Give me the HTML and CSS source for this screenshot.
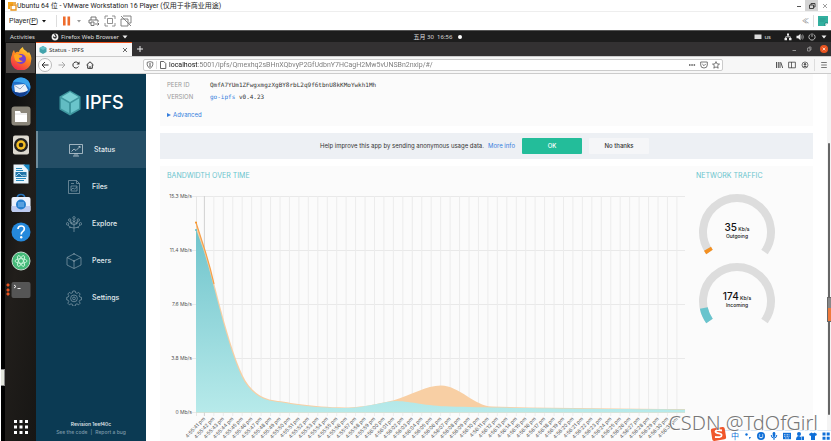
FILE: index.html
```html
<!DOCTYPE html>
<html lang="en">
<head>
<meta charset="utf-8">
<title>Status - IPFS</title>
<link rel="stylesheet" href="styles.css">
</head>
<body>
<div class="host">
  <header class="titlebar">
    <svg class="i10" viewBox="0 0 10 10"><path d="M1 1h5v4H3v3H1z" fill="#f5a51c"/><path d="M4 4h5v5H4zM6 2h3" fill="none" stroke="#e8931a" stroke-width="1.3"/></svg>
    <span class="title">Ubuntu 64 位 - VMware Workstation 16 Player (仅用于非商业用途)</span>
    <button class="wbtn" aria-label="Minimize"><svg class="i8" viewBox="0 0 8 8"><path d="M2 4.5h4" stroke="#555"/></svg></button>
    <button class="wbtn on" aria-label="Restore"><svg class="i8" viewBox="0 0 8 8"><path d="M1.5 3h4v3.5h-4zM3 3V1.5h4V5H5.500" fill="none" stroke="#333" stroke-width=".9"/></svg></button>
    <button class="wbtn" aria-label="Close"><svg class="i8" viewBox="0 0 8 8"><path d="M2 2l4 4M6 2L2 6" stroke="#888" stroke-width=".8"/></svg></button>
  </header>
  <div class="toolbar">
    <button class="player"><span>Player(<u>P</u>)</span><svg class="i8" viewBox="0 0 8 8"><path d="M2 3h4L4 5.500z" fill="#111"/></svg></button>
    <i class="sep"></i>
    <button aria-label="Pause"><svg class="i10" viewBox="0 0 10 10"><path d="M1 .5h2.600v9H1zM5.500 .5h2.600v9H5.500z" fill="#ee6c2c"/></svg></button>
    <svg class="i8" viewBox="0 0 8 8"><path d="M1 3h4L3 5.500z" fill="#999"/></svg>
    <button aria-label="Send keys"><svg class="i12" viewBox="0 0 12 12"><path d="M3 5V2h5v3M3 8H1V5h9v2M3 7h3v3.500H3z" fill="none" stroke="#666" stroke-width=".9"/><path d="M7 9h4M9.500 7.500L11 9l-1.500 1.500" fill="none" stroke="#555" stroke-width=".8"/></svg></button>
    <button aria-label="Full screen"><svg class="i12" viewBox="0 0 12 12"><path d="M1 4V1h3M8 1h3v3M11 8v3H8M4 11H1V8M3.500 3.500h5v5h-5z" fill="none" stroke="#777" stroke-width=".8"/></svg></button>
    <button aria-label="Unity mode"><svg class="i12" viewBox="0 0 12 12"><path d="M3 1h8v7H9M1 4h7v7H1zM1 1l10 10" fill="none" stroke="#777" stroke-width=".9"/></svg></button>
    <span class="grow"></span>
    <span class="chev">≪</span>
    <i class="sep"></i>
    <svg class="i10" viewBox="0 0 10 10"><path d="M0 0h10v7l-3 3H0z" fill="#32b09f"/><path d="M7 10V7h3" fill="#fff" stroke="#167a70" stroke-width=".7"/><path d="M1.500 3h6M1.500 5h5" stroke="#258f83" stroke-width=".6"/></svg>
  </div>

  <div class="gnome">
    <div class="gleft"><button>Activities</button>
      <button class="app"><svg class="i8" viewBox="0 0 8 8"><circle cx="4" cy="4" r="3.400" fill="#eee"/><path d="M4 .5c-1 1.500 2 2 1 4-1 1-2.500 0-2.500-1" fill="none" stroke="#1d1d1d" stroke-width="1.100"/></svg>Firefox Web Browser<svg class="i8" viewBox="0 0 8 8"><path d="M1.500 2.500h5L4 5.500z" fill="#eee"/></svg></button></div>
    <button class="clock">五月 30&nbsp; 16:56<i class="dot"></i></button>
    <div class="gright">
      <button class="kb"><svg class="i8" viewBox="0 0 8 8"><path d="M.5 1.500h7v4.500h-7z" fill="#ddd"/></svg>us</button>
      <svg class="i8" viewBox="0 0 8 8"><path d="M3 .5h2v2H3zM.5 5h2.500v2.300H.5zM5 5h2.500v2.300H5z" fill="#eee"/><path d="M4 2v1.500M1.700 5.500V3.800h4.600v1.700" fill="none" stroke="#eee" stroke-width=".8"/></svg>
      <svg class="i8" viewBox="0 0 8 8"><path d="M.5 2.800h1.700L4.500.8v6.400L2.200 5.200H.5z" fill="#eee"/><path d="M5.500 2.500q1 1.500 0 3M6.600 1.500q1.600 2.500 0 5" fill="none" stroke="#bbb" stroke-width=".7"/></svg>
      <svg class="i8" viewBox="0 0 8 8"><path d="M2.500 1.300a3.100 3.100 0 1 0 3 0M4 .3v3.500" fill="none" stroke="#ddd" stroke-width=".8"/></svg>
      <svg class="i8" viewBox="0 0 8 8"><path d="M1.500 2.500h5L4 5.500z" fill="#eee"/></svg>
    </div>
  </div>

  <div class="desktop">
    <nav class="dock" aria-label="Dock">
      <button class="ff" aria-label="Firefox"><svg viewBox="0 0 24 24"><defs><linearGradient id="fx" x1=".8" y1="0" x2=".3" y2="1"><stop offset="0" stop-color="#ffe23e"/><stop offset=".45" stop-color="#ff8a1e"/><stop offset="1" stop-color="#f0264f"/></linearGradient></defs><path d="M3 9c0-2 1-4 2-5l1 3q2-2 4-1c0-2 2-4 4-5 0 3 3 3 5 6l1-1c2 3 3 6 2 9a10 9 0 0 1-20 1C1.500 13 2 11 3 9z" fill="url(#fx)"/><circle cx="12" cy="13" r="5" fill="#7442cf"/><path d="M5 9q3-2 6 0 3 0 2 2l-3 1q0 3 4 3-5 3-8-1-1-3-1-5z" fill="#ffa51f"/></svg></button>
      <button aria-label="Thunderbird"><svg viewBox="0 0 20 20"><circle cx="10" cy="10" r="9.500" fill="#1f70c9"/><path d="M10 .5a9.500 9.500 0 0 1 9 12q-3-6-9-7-4-1-8-.500A9 9 0 0 1 10 .5z" fill="#3aa4ee"/><path d="M3 8l11-1 3 6-5 4-8-2z" fill="#eef3fa"/><path d="M3 8l6 4 5-5" fill="none" stroke="#96a8c3"/><path d="M1 13q5 5 16 1-3 6-8 5.500-6-1-8-6.500z" fill="#123f91"/></svg></button>
      <button aria-label="Files"><svg viewBox="0 0 20 20"><rect x=".5" y=".5" width="19" height="19" rx="3" fill="#8c877b"/><path d="M4 5h5l1 2h6v9H4z" fill="#fff"/><path d="M4 8h12" stroke="#ddd"/></svg></button>
      <button aria-label="Rhythmbox"><svg viewBox="0 0 20 20"><rect x="2" y=".5" width="16" height="19" rx="2" fill="#ddd9cf"/><circle cx="10" cy="10" r="7" fill="#222"/><circle cx="10" cy="10" r="4.700" fill="#f4bf25"/><circle cx="10" cy="10" r="2.300" fill="#2a2515"/></svg></button>
      <button aria-label="Writer"><svg viewBox="0 0 20 20"><path d="M2.500.5h11l4 4v15h-15z" fill="#e9f5fc"/><path d="M12 .5h6.500v7z" fill="#1b8ac6"/><path d="M5 4.500h6M5 6.500h7M5 14.500h10M5 16.500h8" stroke="#258bbf"/><path d="M4.500 8h11v5h-11z" fill="#2174a8"/><path d="M5 12l3-3 3 3 2-1 2 1" fill="none" stroke="#9fd3ed"/></svg></button>
      <button aria-label="Software"><svg viewBox="0 0 20 20"><path d="M6 6q0-4.500 4-4.500T14 6" fill="none" stroke="#2674bd" stroke-width="1.500"/><rect x=".5" y="4" width="19" height="15" rx="2" fill="#eaf0fc"/><path d="M.5 13h19v4q0 2-2 2h-15q-2 0-2-2z" fill="#bdcbf0"/><circle cx="10" cy="11.500" r="5" fill="#2680cf"/><path d="M8 9v5M10 9v5M12 9v5" stroke="#a4d2fa" stroke-width=".8"/></svg></button>
      <button aria-label="Help"><svg viewBox="0 0 20 20"><circle cx="10" cy="10" r="9.500" fill="#2589dc"/><path d="M7 7q0-3 3.200-3t3.100 3q0 1.500-1.700 2.600Q10.200 10.600 10.200 12.500" fill="none" stroke="#fff" stroke-width="1.700"/><circle cx="10.200" cy="15.300" r="1.200" fill="#fff"/></svg></button>
      <button aria-label="Atom"><svg viewBox="0 0 20 20"><circle cx="10" cy="10" r="9" fill="#45ba79" stroke="#c6ddd0"/><g fill="none" stroke="#d6fae4" stroke-width=".8"><ellipse cx="10" cy="10" rx="6" ry="2.300"/><ellipse cx="10" cy="10" rx="6" ry="2.300" transform="rotate(60 10 10)"/><ellipse cx="10" cy="10" rx="6" ry="2.300" transform="rotate(120 10 10)"/></g></svg></button>
      <button class="term" aria-label="Terminal"><svg viewBox="0 0 20 20"><rect x=".5" y="2" width="19" height="16" rx="2" fill="#555"/><path d="M3 5l2 1.500L3 8M6.500 8.500h3" fill="none" stroke="#fff" stroke-width=".9"/></svg></button>
      <button class="apps" aria-label="Show applications"><svg viewBox="0 0 14 14"><path d="M0 0h3v3H0zM5.500 0h3v3h-3zM11 0h3v3h-3zM0 5.500h3v3H0zM5.500 5.500h3v3h-3zM11 5.500h3v3h-3zM0 11h3v3H0zM5.500 11h3v3h-3zM11 11h3v3h-3z" fill="#fff"/></svg></button>
    </nav>

    <main class="browser">
      <div class="tabs">
        <div class="tab"><svg class="i8" viewBox="0 0 8 8"><path d="M4 0l3.500 2v4L4 8 .5 6V2z" fill="#43a3ab"/><path d="M4 0l3.500 2L4 4 .5 2z" fill="#63c0c7"/></svg><span>Status - IPFS</span><button aria-label="Close tab"><svg class="i8" viewBox="0 0 8 8"><path d="M2 2l4 4M6 2L2 6" stroke="#444" stroke-width=".8"/></svg></button></div>
        <button class="new" aria-label="New tab"><svg class="i8" viewBox="0 0 8 8"><path d="M4 1v6M1 4h6" stroke="#eee"/></svg></button>
        <span class="grow"></span>
        <button aria-label="Minimize window"><svg class="i8" viewBox="0 0 8 8"><path d="M2.500 5.500h3.500" stroke="#aaa" stroke-width=".8"/></svg></button>
        <button aria-label="Restore window"><svg class="i8" viewBox="0 0 8 8"><path d="M2.500 3h2.500v3H2.500zM4 3V2h2v3H5" fill="none" stroke="#aaa" stroke-width=".7"/></svg></button>
        <button aria-label="Close window"><svg class="i8" viewBox="0 0 8 8"><circle cx="4" cy="4" r="4" fill="#e95420"/><path d="M2.700 2.700l2.600 2.600M5.300 2.700L2.700 5.300" stroke="#fff" stroke-width=".7"/></svg></button>
      </div>
      <div class="navbar">
        <button class="back" aria-label="Back"><svg class="i8" viewBox="0 0 8 8"><path d="M7.500 4H1M4 1L1 4l3 3" fill="none" stroke="#333"/></svg></button>
        <button aria-label="Forward"><svg class="i8" viewBox="0 0 8 8"><path d="M.5 4H7M4 1l3 3-3 3" fill="none" stroke="#aaa"/></svg></button>
        <button aria-label="Reload"><svg class="i8" viewBox="0 0 8 8"><path d="M6.500 5.500a3 3 0 1 1 0-3" fill="none" stroke="#333"/><path d="M7.500.5v3h-3z" fill="#333"/></svg></button>
        <button aria-label="Home"><svg class="i8" viewBox="0 0 8 8"><path d="M.5 4L4 .8 7.500 4M1.700 3.500V7.300h4.600V3.500M4 7.300V5" fill="none" stroke="#333"/></svg></button>
        <div class="url">
          <svg class="i8" viewBox="0 0 8 8"><path d="M4 .7l2.800.6v2.500Q6.500 6 4 7.400 1.500 6 1.200 3.800V1.300z" fill="none" stroke="#555" stroke-width=".8"/><path d="M4 2v4" stroke="#555"/></svg>
          <i class="sep"></i>
          <svg class="i8" viewBox="0 0 8 8"><path d="M1.500.5h3.300l2 2v5H1.500z" fill="none" stroke="#555" stroke-width=".9"/></svg>
          <input aria-label="Address" value="localhost:5001/ipfs/Qmexhq2sBHnXQbvyP2GfUdbnY7HCagH2Mw5vUNSBn2nxip/#/">
          <div class="urlbtns">
          <svg class="i8" viewBox="0 0 8 8"><path d="M1 3.300h1.500v1.400H1zM3.300 3.300h1.500v1.400H3.300zM5.600 3.300h1.500v1.400H5.600z" fill="#555"/></svg>
          <svg class="i8" viewBox="0 0 8 8"><path d="M.7 1h6.600v3a3.300 3 0 0 1-6.600 0zM2.300 3L4 4.700 5.700 3" fill="none" stroke="#555" stroke-width=".8"/></svg>
          <svg class="i8" viewBox="0 0 8 8"><path d="M4 .6l1 2.300 2.500.2-1.900 1.600.6 2.500L4 5.900 1.800 7.200l.6-2.500L.5 3.100 3 2.900z" fill="none" stroke="#444" stroke-width=".7"/></svg>
          </div>
        </div>
        <div class="tools">
          <button aria-label="Library"><svg class="i8" viewBox="0 0 8 8"><path d="M1.500 1v6M3.300 1v6M5 1v6M5.800 1.300L7.700 7" stroke="#555"/></svg></button>
          <button aria-label="Sidebar"><svg class="i8" viewBox="0 0 8 8"><path d="M.6 1.200h6.800v5.600H.6zM3.500 1v6" fill="none" stroke="#444" stroke-width=".8"/></svg></button>
          <button aria-label="Account"><svg class="i8" viewBox="0 0 8 8"><circle cx="4" cy="4" r="3" fill="none" stroke="#555" stroke-width=".8"/><circle cx="4" cy="3.200" r="1.200" fill="#555"/><path d="M2 6q2-2.300 4 0z" fill="#555"/></svg></button>
          <i class="sep"></i>
          <button aria-label="Menu"><svg class="i8" viewBox="0 0 8 8"><path d="M1.200 1.500h5.600M1.200 4h5.600M1.200 6.500h5.600" stroke="#555" stroke-width=".8"/></svg></button>
        </div>
      </div>

      <div class="page">
        <aside class="side">
          <div class="logo"><svg viewBox="0 0 22 26"><path d="M11 .5l10.500 6v13L11 25.500.5 19.500v-13z" fill="#3f979f"/><path d="M11 2l8.500 5L11 12 2.500 7z" fill="#7ad0d4"/><path d="M2 8.500l8 4.700v9.800l-8-4.500z" fill="#62bcc3"/><path d="M20 8.500l-8 4.700v9.800l8-4.500z" fill="#6ac5cb"/></svg><span>IPFS</span></div>
          <nav class="menu">
            <a class="active" href="#status"><svg viewBox="0 0 16 16"><path d="M1.500 2.500h13v9h-13zM7 11.500v2M9 11.500v2M5 14h6M3.500 9.500L6 7l2 1.500L12 4.500M10.500 4.500H12V6"/></svg>Status</a>
            <a href="#files"><svg viewBox="0 0 16 16"><path d="M2.500 1.500h8l3 3v10h-11zM10.500 1.500v3h3M5 7h6v5H5zM5 11l2-2 1.500 1L11 8M5 4.500h3"/></svg>Files</a>
            <a href="#explore"><svg viewBox="0 0 16 16"><path d="M8 16V3M8 12q-5 0-6-3M8 12q5 0 6-3M8 9Q4.500 8 4 5M8 9q3.500-1 4-4M8 6L6.500 4.500M8 6l1.500-1.500M4.500 11L3 12M11.500 11l1.500 1"/><circle cx="8" cy="1.800" r="1.200"/><circle cx="3.700" cy="4" r="1.200"/><circle cx="12.300" cy="4" r="1.200"/><circle cx="1.500" cy="7.800" r="1.200"/><circle cx="14.500" cy="7.800" r="1.200"/><circle cx="5.500" cy="7" r=".8"/><circle cx="10.500" cy="7" r=".8"/></svg>Explore</a>
            <a href="#peers"><svg viewBox="0 0 16 16"><path d="M8 .8l7 3.700v7.500L8 15.500 1 12V4.500zM1 4.500L8 8l7-3.500M8 8v7.500"/><circle cx="8" cy=".9" r=".5"/><circle cx="8" cy="8" r=".6"/></svg>Peers</a>
            <a href="#settings"><svg viewBox="0 0 16 16"><path d="M6.800 1h2.400l.4 1.800 1.400.6 1.600-1 1.600 1.600-1 1.600.6 1.400 1.700.4v2.400l-1.700.4-.6 1.400 1 1.600-1.600 1.600-1.600-1-1.400.6-.4 1.700H6.800l-.4-1.700-1.400-.6-1.600 1-1.600-1.600 1-1.600-.6-1.400L.7 9.800V7.400L2.200 7l.6-1.400-1-1.600 1.600-1.600 1.600 1 1.400-.6z"/><circle cx="8" cy="8.400" r="3.400"/><circle cx="8" cy="8.400" r="1.400"/></svg>Settings</a>
          </nav>
          <footer class="rev"><div>Revision 1eef40c</div><div class="links"><a href="#code">See the code</a><span>|</span><a href="#bug">Report a bug</a></div></footer>
        </aside>

        <div class="content">
          <section class="panel info">
            <dl><dt>PEER ID</dt><dd>QmfA7YUm1ZFwgxmgzXgBY8rbL2q9f6tbnU8kKMoYwkh1Mh</dd><dt>VERSION</dt><dd><a href="#version">go-ipfs</a> v0.4.23</dd></dl>
            <details><summary><svg viewBox="0 0 4 6"><path d="M0 1l4 2-4 2z" fill="#357edd"/></svg>Advanced</summary></details>
          </section>
          <section class="ask"><span>Help improve this app by sending anonymous usage data.</span><a href="#more">More info</a><button class="ok">OK</button><button class="no">No thanks</button></section>
          <section class="panel charts">
            <div><h2>BANDWIDTH OVER TIME</h2><svg class="chart" viewBox="167 190 520 251" id="chart" role="img" aria-label="Bandwidth over time">
              <defs><linearGradient id="in" x1="0" y1="0" x2="0" y2="1"><stop offset="0" stop-color="#70c4cc"/><stop offset="1" stop-color="#b7eaea"/></linearGradient></defs>
              <g id="grid"></g>
              <path d="M196 222.500L204.500 249C216 285 226 338 242.500 375C250 391 262 399 275 400.500C290 402.500 310 407 345 407.500C365 407.500 385 402 393 400.500C412 395 426 385.500 441 385.500C460 386 474 406 492 406.500C550 408 620 408.500 685 409V412.500H196z" fill="#f8cfa4"/>
              <path d="M196 229L203.500 250C215 286 225 339 241.500 376C249 392 261 400 275 401.500C290 403.500 310 408 345 408C365 408 385 401 397 401C412 401.500 425 406 450 406.500C500 408 600 409 685 409.500V412.500H196z" fill="url(#in)"/>
              <path d="M196 222.500L204.500 249Q210 266 214 284" fill="none" stroke="#f5a04b" stroke-width="1.200"/>
              <circle cx="196" cy="222.500" r="1" fill="#f39021"/><circle cx="196" cy="230" r="1" fill="#5bbfca"/>
            </svg></div>
            <div><h2>NETWORK TRAFFIC</h2>
              <div class="gauge"><svg viewBox="0 0 82 62"><path d="M13.500 58A34 34 0 1 1 68.500 58" stroke="#ddd"/><path d="M13.500 58A34 34 0 0 1 11.500 54.800" stroke="#f39021"/></svg><p><b>35</b> Kb/s<br>Outgoing</p></div>
              <div class="gauge"><svg viewBox="0 0 82 62"><path d="M13.500 58A34 34 0 1 1 68.500 58" stroke="#ddd"/><path d="M13.500 58A34 34 0 0 1 7.800 45" stroke="#69c4cd"/></svg><p><b>174</b> Kb/s<br>Incoming</p></div>
            </div>
          </section>
        </div>
        <div class="scroll"><i></i></div>
      </div>
    </main>
  </div>
  <i class="lefttag"></i><i class="righttag"></i>
  <div class="ime">
    <svg viewBox="0 0 17 14"><rect x="1.500" y=".8" width="14" height="12.500" rx="2" fill="#f0562b" transform="rotate(-9 8 7)"/><path d="M12 3.500q-6-1-6.500 1 0 1.500 3.500 1.800 3 .5 2.500 2.400-.7 2-6.500 1.300" fill="none" stroke="#fff" stroke-width="1.800"/></svg>
    <span>中</span>
    <svg class="i8" viewBox="0 0 8 8"><circle cx="2.500" cy="2.500" r="1.200"/><path d="M5 5h2L5.500 7.500z"/></svg>
    <svg class="i8" viewBox="0 0 8 8"><circle cx="4" cy="4" r="4"/><path d="M1.800 4.500q2.200 3 4.400 0M2 3h1.200M5 3h1.200" stroke="#fff" fill="none"/></svg>
    <svg class="i8" viewBox="0 0 8 8"><rect x="2.700" width="2.600" height="5" rx="1.300"/><path d="M1.200 3q0 3 2.800 3t2.800-3M4 6v2" fill="none" stroke="#0f6fd8"/></svg>
    <svg class="i8" viewBox="0 0 8 8"><path d="M0 .8h8v6.400H0z"/><path d="M1 2.700h6M1 4.300h6M2 6h4" stroke="#fff" stroke-width=".7" stroke-dasharray="1 .5"/></svg>
    <svg class="i8" viewBox="0 0 8 8"><circle cx="3" cy="2" r="2"/><path d="M0 8q0-4 3-4l2 1v3zM5.500 4.500H8V8H5.500z"/></svg>
    <svg class="i8" viewBox="0 0 8 8"><path d="M2.500.5q1.500 1.500 3 0L8 2 7 4l-1-.5V8H2V3.500L1 4 0 2z"/></svg>
    <svg class="i8" viewBox="0 0 8 8"><path d="M.5.5h3v3h-3zM4.700.5h3v3h-3zM.5 4.700h3v3h-3zM4.700 4.700h3v3h-3z"/></svg>
  </div>
  <div class="mark">CSDN @TdOfGirl</div>
</div>
<script src="chart.js"></script>
</body>
</html>
```
FILE: styles.css
```css
* { box-sizing: border-box; }
body { margin: 0; background: #fff; font-family: "Noto Sans", "Noto Sans CJK SC", sans-serif; font-size: 7px; line-height: 10px; }
button { border: 0; padding: 0; margin: 0; background: none; color: inherit; font: inherit; display: flex; align-items: center; justify-content: center; }
a { text-decoration: none; color: #357edd; }
svg { display: block; flex: none; }
.i8 { width: 8px; height: 8px; }
.i10 { width: 10px; height: 10px; }
.i12 { width: 12px; height: 12px; }
.grow { flex: 1; }
.sep { width: 1px; height: 12px; background: #ddd; }

.host { position: relative; height: 100vh; overflow: hidden; display: flex; flex-direction: column; border-left: 1px solid #fff; box-shadow: inset 4px 0 #000; padding-left: 4px; }
.titlebar { display: flex; align-items: center; height: 12px; border-bottom: 1px solid #eee; padding-left: 2px; color: #222; }
.title { flex: 1; font-family: Roboto, "Noto Sans CJK SC", sans-serif; white-space: nowrap; }
.wbtn { width: 13px; height: 11px; }
.wbtn.on { background: #d4d4d4; }
.toolbar { display: flex; align-items: center; gap: 4px; height: 18px; padding: 0 3px 0 4px; color: #222; }
.player { gap: 2px; font-family: "Liberation Sans", sans-serif; }
.toolbar .player + .sep { margin: 0 1px 0 4px; }
.chev { color: #777; }

.gnome { display: grid; grid-template-columns: 1fr auto 1fr; align-items: center; height: 12px; background: #1d1d1d; color: #ddd; border-top: 1px solid #555; padding: 0 3px 0 5px; font-size: 6px; }
.gleft, .gright { display: flex; align-items: center; gap: 5px; }
.gleft { gap: 16px; }
.gright { justify-content: flex-end; gap: 4px; }
.app, .kb { gap: 2px; }
.kb { margin-right: 9px; }
.dot { width: 4px; height: 4px; border-radius: 2px; background: #fff; margin-left: 6px; }
.clock { margin-left: 38px; }

.desktop { flex: 1; min-height: 0; display: flex; }
.dock { width: 31px; background: linear-gradient(100deg, #111 20%, #211e1b 50%, #171614); display: flex; flex-direction: column; align-items: center; gap: 9px; padding-bottom: 7px; }
.dock svg { width: 20px; height: 20px; }
.dock .ff { width: 29px; height: 30px; background: #4d4946; margin: 1px 0 -5px; }
.dock .ff svg { width: 24px; height: 24px; }
.dock .term { width: 31px; background: radial-gradient(circle at 3px 5px, #e95420 1px, transparent 2px), radial-gradient(circle at 3px 10px, #e95420 1px, transparent 2px), radial-gradient(circle at 3px 14px, #e95420 1px, transparent 2px); }
.dock .apps { margin-top: auto; }
.dock .apps svg { width: 14px; height: 14px; }

.browser { flex: 1; min-width: 0; display: flex; flex-direction: column; }
.tabs { display: flex; align-items: center; gap: 7px; height: 14px; background: #333132; padding-right: 3px; }
.tab { display: flex; align-items: center; gap: 2px; width: 96px; height: 14px; background: #f8f8f8; border-top: 1px solid #e95420; padding: 0 3px; color: #333; font-size: 6px; }
.tab span { flex: 1; }
.new { margin-left: -3px; }
.navbar { display: flex; align-items: center; gap: 6px; height: 18px; background: #f7f7f7; border-top: 1px solid #ccc; border-bottom: 1px solid #ccc; padding: 0 3px 0 2px; }
.back { width: 14px; height: 14px; border: 1px solid #bbb; border-radius: 7px; background: #fff; }
.url { flex: 1; margin: 0 46px 0 43px; height: 12px; display: flex; align-items: center; gap: 2px; background: #fff; border: 1px solid #ccc; border-radius: 2px; padding: 0 2px 0 2px; }
.url .sep { height: 8px; }
.url input { flex: 1; min-width: 0; border: 0; padding: 0; outline: 0; font: 7px/10px Roboto, "Noto Sans", sans-serif; height: 10px; color: transparent; background: linear-gradient(90deg, #111 29px, #777 29px); -webkit-background-clip: text; background-clip: text; }
.urlbtns { display: flex; gap: 4px; }
.tools { display: flex; align-items: center; gap: 5px; }

.page { flex: 1; min-height: 0; display: flex; background: #fff; font-family: Inter, "Liberation Sans", sans-serif; }
.side { width: 110px; background: #0b3a53; display: flex; flex-direction: column; color: #e3eaee; }
.logo { display: flex; align-items: center; gap: 4px; height: 57px; padding-left: 23px; font-size: 18px; font-weight: 500; line-height: 20px; color: #fff; }
.logo svg { width: 22px; height: 26px; }
.menu a { display: flex; align-items: center; gap: 10px; height: 37px; padding-left: 30px; color: #e3eaee; font-weight: 500; }
.menu a.active { background: #244e66; border-left: 2px solid #6d8c9c; }
.menu svg { width: 16px; height: 16px; fill: none; stroke: #88a1ae; stroke-width: .7; }
.menu .active svg { stroke: #d5e0e5; }
.rev { margin-top: auto; text-align: center; font-size: 5px; line-height: 8px; padding-bottom: 5px; font-weight: 500; }
.links { display: flex; justify-content: center; gap: 3px; color: #7d9aa9; }
.links a { color: #7d9aa9; }

.content { flex: 1; min-width: 0; display: flex; flex-direction: column; gap: 7px; padding: 0 14px; }
.panel { background: #fbfbfb; padding: 5px 7px; }
.info { height: 52px; padding-top: 6px; }
.info dl { margin: 0; display: grid; grid-template-columns: 43px 1fr; row-gap: 2px; }
.info dt { color: #999; font-size: 6px; }
.info dd { margin: 0; color: #333; font-family: "DejaVu Sans Mono", monospace; font-size: 6px; }
.info summary { display: flex; align-items: center; gap: 2px; margin-top: 8px; color: #357edd; list-style: none; }
.info summary svg { width: 4px; height: 6px; }
.info details { font-size: 6px; }
.ask { display: flex; align-items: center; justify-content: flex-end; height: 26px; background: #edf0f4; padding-right: 164px; color: #333; font-size: 6px; }
.ask a { margin: 0 7px 0 4px; }
.ask button { width: 60px; height: 16px; border-radius: 1px; font-weight: 500; }
.ask .ok { background: #23bd9a; color: #fff; margin-right: 7px; }
.ask .no { background: #f5f6f8; }
.charts { flex: 1; min-height: 0; display: grid; grid-template-columns: 1fr 110px; column-gap: 9px; padding-bottom: 0; }
h2 { margin: 0; font-size: 7px; line-height: 10px; font-weight: 400; color: #69c4cd; }
.chart { width: 100%; margin-top: 9px; }
.chart text { font-size: 5px; fill: #555; text-anchor: end; }
.gauge { display: grid; width: 82px; margin-top: 7px; }
h2 + .gauge { margin-top: 13px; }
.gauge svg, .gauge p { grid-area: 1 / 1; }
.gauge svg { width: 82px; height: 62px; fill: none; stroke-width: 8; }
.gauge p { margin: 30px 0 0; text-align: center; font-size: 5px; line-height: 7px; font-weight: 500; color: #111; }
.gauge b { font-size: 10px; font-weight: 500; }

.scroll { width: 4px; background: #f4f4f4; padding: 69px 0 26px 1px; display: flex; }
.scroll i { width: 2px; background: #666; border-radius: 1px; }
.lefttag { position: absolute; left: -1px; top: 369px; width: 5px; height: 17px; background: #e3e6dd; border: 1px solid #888; }
.righttag { position: absolute; right: 0; top: 297px; width: 4px; height: 25px; background: linear-gradient(#888 10px, #ee7a3c 10px); border: 1px solid #666; border-right: 0; }
.ime { position: absolute; right: 0; bottom: 0; display: flex; align-items: center; gap: 5px; height: 11px; padding-right: 1px; color: #0f6fd8; fill: #0f6fd8; background: #fff; border-top: 1px solid #d5e5f5; font-size: 8px; line-height: 8px; }
.ime svg:first-child { width: 17px; height: 16px; margin: -4px -1px 0 -1px; }
.mark { position: absolute; right: 13px; bottom: 10px; font-family: "Noto Sans", sans-serif; font-weight: 300; font-size: 20px; line-height: 16px; color: #777; text-shadow: 1px 1px #fff; }
```
FILE: chart.js
```js
const grid = document.getElementById('grid');
const NS = 'http://www.w3.org/2000/svg';
function add(name, attrs, text) {
  const el = document.createElementNS(NS, name);
  for (const key in attrs) el.setAttribute(key, attrs[key]);
  if (text) el.textContent = text;
  grid.appendChild(el);
}
['15.3', '11.4', '7.6', '3.8', '0'].forEach((value, i) => {
  const y = 196.5 + 54 * i;
  add('path', { d: `M192 ${y}H685`, stroke: '#e9e9e9' });
  add('text', { x: 192, y: y + 1 }, `${value} Mb/s`);
});
add('path', { d: 'M196.500 196V416', stroke: '#e6e6e6' });
for (let i = 0; i <= 50; i++) {
  const x = 204.4 + 9.45 * i;
  const s = 41 + i;
  const time = `4:${s < 60 ? 55 : 56}:${String(s % 60).padStart(2, '0')} pm`;
  add('path', { d: `M${x} 196V416`, stroke: i ? '#ececec' : '#d2d2d2' });
  add('text', { x: 0, y: 0, transform: `translate(${x + 1} 419) rotate(-47)` }, time);
}
```
